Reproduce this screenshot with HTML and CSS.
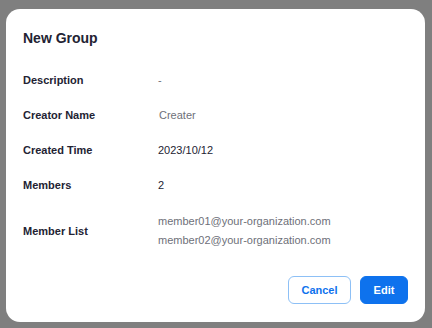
FILE: index.html
```html
<!DOCTYPE html>
<html lang="en">
<head>
  <meta charset="UTF-8">
  <title>New Group</title>
  <link rel="stylesheet" href="styles.css">
</head>
<body>
  <div class="overlay">
    <div class="dialog">
      <h2 class="dialog-title">New Group</h2>

      <div class="info-row">
        <span class="label">Description</span>
        <span class="value muted">-</span>
      </div>
      <div class="info-row">
        <span class="label">Creator Name</span>
        <span class="value muted creator">Creater</span>
      </div>
      <div class="info-row">
        <span class="label">Created Time</span>
        <span class="value">2023/10/12</span>
      </div>
      <div class="info-row">
        <span class="label">Members</span>
        <span class="value">2</span>
      </div>
      <div class="info-row member-row">
        <span class="label">Member List</span>
        <ul class="member-list">
          <li>member01@your-organization.com</li>
          <li>member02@your-organization.com</li>
        </ul>
      </div>

      <div class="dialog-footer">
        <button class="btn btn-outline">Cancel</button>
        <button class="btn btn-primary">Edit</button>
      </div>
    </div>
  </div>
</body>
</html>
```

FILE: styles.css
```css
body {
  margin: 0;
  padding: 0;
  font-family: 'Liberation Sans', Arial, sans-serif;
  color: #232333;
  background: #7f7f7f;
}

.overlay {
  min-height: 328px;
  padding: 9px 0 0 6px;
  box-sizing: border-box;
}

.dialog {
  width: 419px;
  background: #fff;
  border-radius: 14px;
  padding: 19px 17px 18px;
  box-sizing: border-box;
}

.dialog-title {
  margin: 0 0 14px;
  font-size: 14px;
  line-height: 20px;
  font-weight: bold;
  color: #232333;
}

.info-row {
  display: flex;
  align-items: center;
  height: 35px;
  font-size: 11px;
}

.label {
  width: 135px;
  flex-shrink: 0;
  font-weight: bold;
  color: #232333;
}

.value {
  color: #232333;
}

.muted {
  color: #6e7079;
}

.creator {
  padding-left: 1px;
}

.member-row {
  height: 38px;
  margin-top: 10px;
}

.member-list {
  list-style: none;
  margin: 0;
  padding: 0;
  height: 38px;
  overflow: hidden;
  line-height: 19px;
  color: #6e7079;
}

.dialog-footer {
  display: flex;
  justify-content: flex-end;
  gap: 9px;
  margin-top: 26px;
}

.btn {
  height: 28px;
  border-radius: 6px;
  font-family: 'Liberation Sans', Arial, sans-serif;
  font-size: 11px;
  font-weight: bold;
  padding: 0;
  cursor: pointer;
}

.btn-outline {
  width: 63px;
  background: #fff;
  border: 1px solid #8dc0f6;
  color: #0e72ed;
}

.btn-primary {
  width: 48px;
  background: #0e72ed;
  border: 1px solid #0e72ed;
  color: #fff;
}
```
